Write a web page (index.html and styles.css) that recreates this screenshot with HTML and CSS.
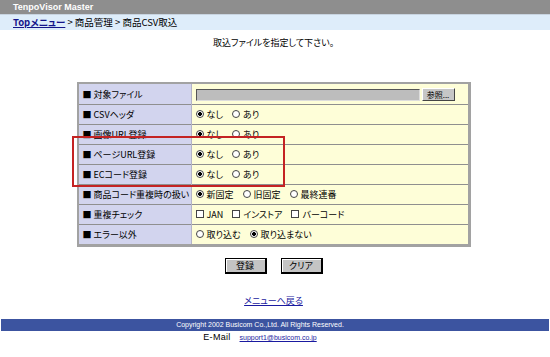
FILE: index.html
```html
<!DOCTYPE html>
<html lang="ja">
<head>
<meta charset="UTF-8">
<title>商品CSV取込</title>
<link rel="stylesheet" href="styles.css">
</head>
<body>

<div class="titlebar">TenpoVisor Master</div>
<div class="crumbs"><a href="#">Topメニュー</a> &gt; 商品管理 &gt; 商品CSV取込</div>

<div class="main">
    <p class="lead">取込ファイルを指定して下さい。</p>

    <form class="csv-form">
        <div class="table-wrap">
            <table class="settings">
                <tr class="first">
                    <th>■ 対象ファイル</th>
                    <td><span class="file-field"></span><button type="button" class="browse">参照...</button></td>
                </tr>
                <tr>
                    <th>■ CSVヘッダ</th>
                    <td><label><input type="radio" name="header" checked> なし</label><label><input type="radio" name="header"> あり</label></td>
                </tr>
                <tr>
                    <th>■ 画像URL登録</th>
                    <td><label><input type="radio" name="img" checked> なし</label><label><input type="radio" name="img"> あり</label></td>
                </tr>
                <tr>
                    <th>■ ページURL登録</th>
                    <td><label><input type="radio" name="page" checked> なし</label><label><input type="radio" name="page"> あり</label></td>
                </tr>
                <tr>
                    <th>■ ECコード登録</th>
                    <td><label><input type="radio" name="ec" checked> なし</label><label><input type="radio" name="ec"> あり</label></td>
                </tr>
                <tr>
                    <th>■ 商品コード重複時の扱い</th>
                    <td><label><input type="radio" name="dup" checked> 新固定</label><label><input type="radio" name="dup"> 旧固定</label><label><input type="radio" name="dup"> 最終連番</label></td>
                </tr>
                <tr>
                    <th>■ 重複チェック</th>
                    <td><label><input type="checkbox"> JAN</label><label><input type="checkbox"> インストア</label><label><input type="checkbox"> バーコード</label></td>
                </tr>
                <tr>
                    <th>■ エラー以外</th>
                    <td><label><input type="radio" name="err"> 取り込む</label><label><input type="radio" name="err" checked> 取り込まない</label></td>
                </tr>
            </table>
            <div class="highlight"></div>
        </div>

        <div class="actions">
            <button type="button" class="btn">登録</button>
            <button type="button" class="btn">クリア</button>
        </div>
    </form>

    <p class="back"><a href="#">メニューへ戻る</a></p>
</div>

<div class="footer">Copyright 2002 Busicom Co.,Ltd. All Rights Reserved.</div>
<div class="contact"><span class="mail-label">E-Mail</span> <a href="#">support1@busicom.co.jp</a></div>

</body>
</html>
```

FILE: styles.css
```css
body {
    margin: 0;
    background: #fff;
    font-family: "Noto Sans CJK JP", "Liberation Sans", sans-serif;
    font-size: 9px;
    font-feature-settings: "palt";
    color: #000;
}
a {
    color: #1a1aa0;
}
.titlebar {
    height: 14px;
    line-height: 14px;
    padding-left: 13px;
    background: #8e8e8e;
    color: #fff;
    font-family: "Liberation Sans", sans-serif;
    font-weight: bold;
    font-size: 9px;
}
.crumbs {
    height: 15px;
    line-height: 15px;
    padding-left: 13px;
    background: #deedfa;
    border-top: 1px solid #c8d4e0;
    font-size: 9.5px;
}
.crumbs a {
    color: #15158a;
    font-weight: bold;
}
.main {
    padding-right: 3px;
    text-align: center;
}
.lead {
    margin: 6px 0 0;
    line-height: 14px;
}
.csv-form {
    margin-top: 32px;
}
.table-wrap {
    position: relative;
    width: 394px;
    margin: 0 auto;
}
.settings {
    width: 394px;
    border-collapse: collapse;
    border: 2px solid #a2a2a2;
    border-right-width: 3px;
    border-bottom-width: 3px;
    text-align: left;
}
.settings th, .settings td {
    height: 19px;
    padding: 0 0 0 4px;
    border-top: 1px solid #8f8f8f;
    font-weight: normal;
    white-space: nowrap;
}
.settings tr.first th, .settings tr.first td {
    height: 20px;
    border-top: none;
}
.settings th {
    width: 108px;
    background: #d2d4ee;
    border-right: 1px solid #b4b4c8;
}
.settings td {
    background: #fefed8;
    padding-left: 4px;
}
.settings label {
    display: inline-flex;
    align-items: center;
    gap: 3px;
    margin-right: 9px;
}
input[type="radio"], input[type="checkbox"] {
    appearance: none;
    margin: 0;
    width: 8px;
    height: 8px;
    border: 1px solid #444;
    background: #fff;
}
input[type="radio"] {
    border-radius: 50%;
}
input[type="radio"]:checked {
    background: radial-gradient(circle, #000 0 1.6px, #fff 2.2px);
}
.file-field {
    display: inline-block;
    vertical-align: middle;
    width: 222px;
    height: 10px;
    background: #bdbdbd;
    border: 1px solid #555;
    border-right-color: #ddd;
    border-bottom-color: #ddd;
}
.browse {
    vertical-align: middle;
    width: 33px;
    height: 13px;
    margin-left: 2px;
    padding: 0;
    font: inherit;
    font-size: 8px;
    background: #c6c6c6;
    border: 1px solid #fff;
    border-right-color: #444;
    border-bottom-color: #444;
}
.highlight {
    position: absolute;
    left: -5px;
    top: 54px;
    width: 209px;
    height: 47px;
    border: 2px solid #c42323;
}
.actions {
    margin-top: 11px;
    display: flex;
    justify-content: center;
    gap: 14px;
}
.btn {
    width: 42px;
    height: 16px;
    padding: 0;
    font: inherit;
    background: #c4c4c4;
    border: 1px solid #000;
    border-right-width: 2px;
    border-bottom-width: 2px;
    box-shadow: inset 1px 1px 0 #fff;
}
.back {
    margin: 20px 0 0;
    line-height: 14px;
}
.footer {
    margin: 11px 1px 0;
    height: 12px;
    line-height: 12px;
    background: #3c54a0;
    color: #fff;
    text-align: center;
    font-family: "Liberation Sans", sans-serif;
    font-size: 7px;
    padding-right: 30px;
}
.contact {
    text-align: center;
    padding-right: 30px;
    line-height: 13px;
    font-family: "Liberation Sans", sans-serif;
    font-size: 7px;
}
.mail-label {
    font-size: 9px;
    letter-spacing: 0.3px;
}
.contact a {
    margin-left: 7px;
}
```
